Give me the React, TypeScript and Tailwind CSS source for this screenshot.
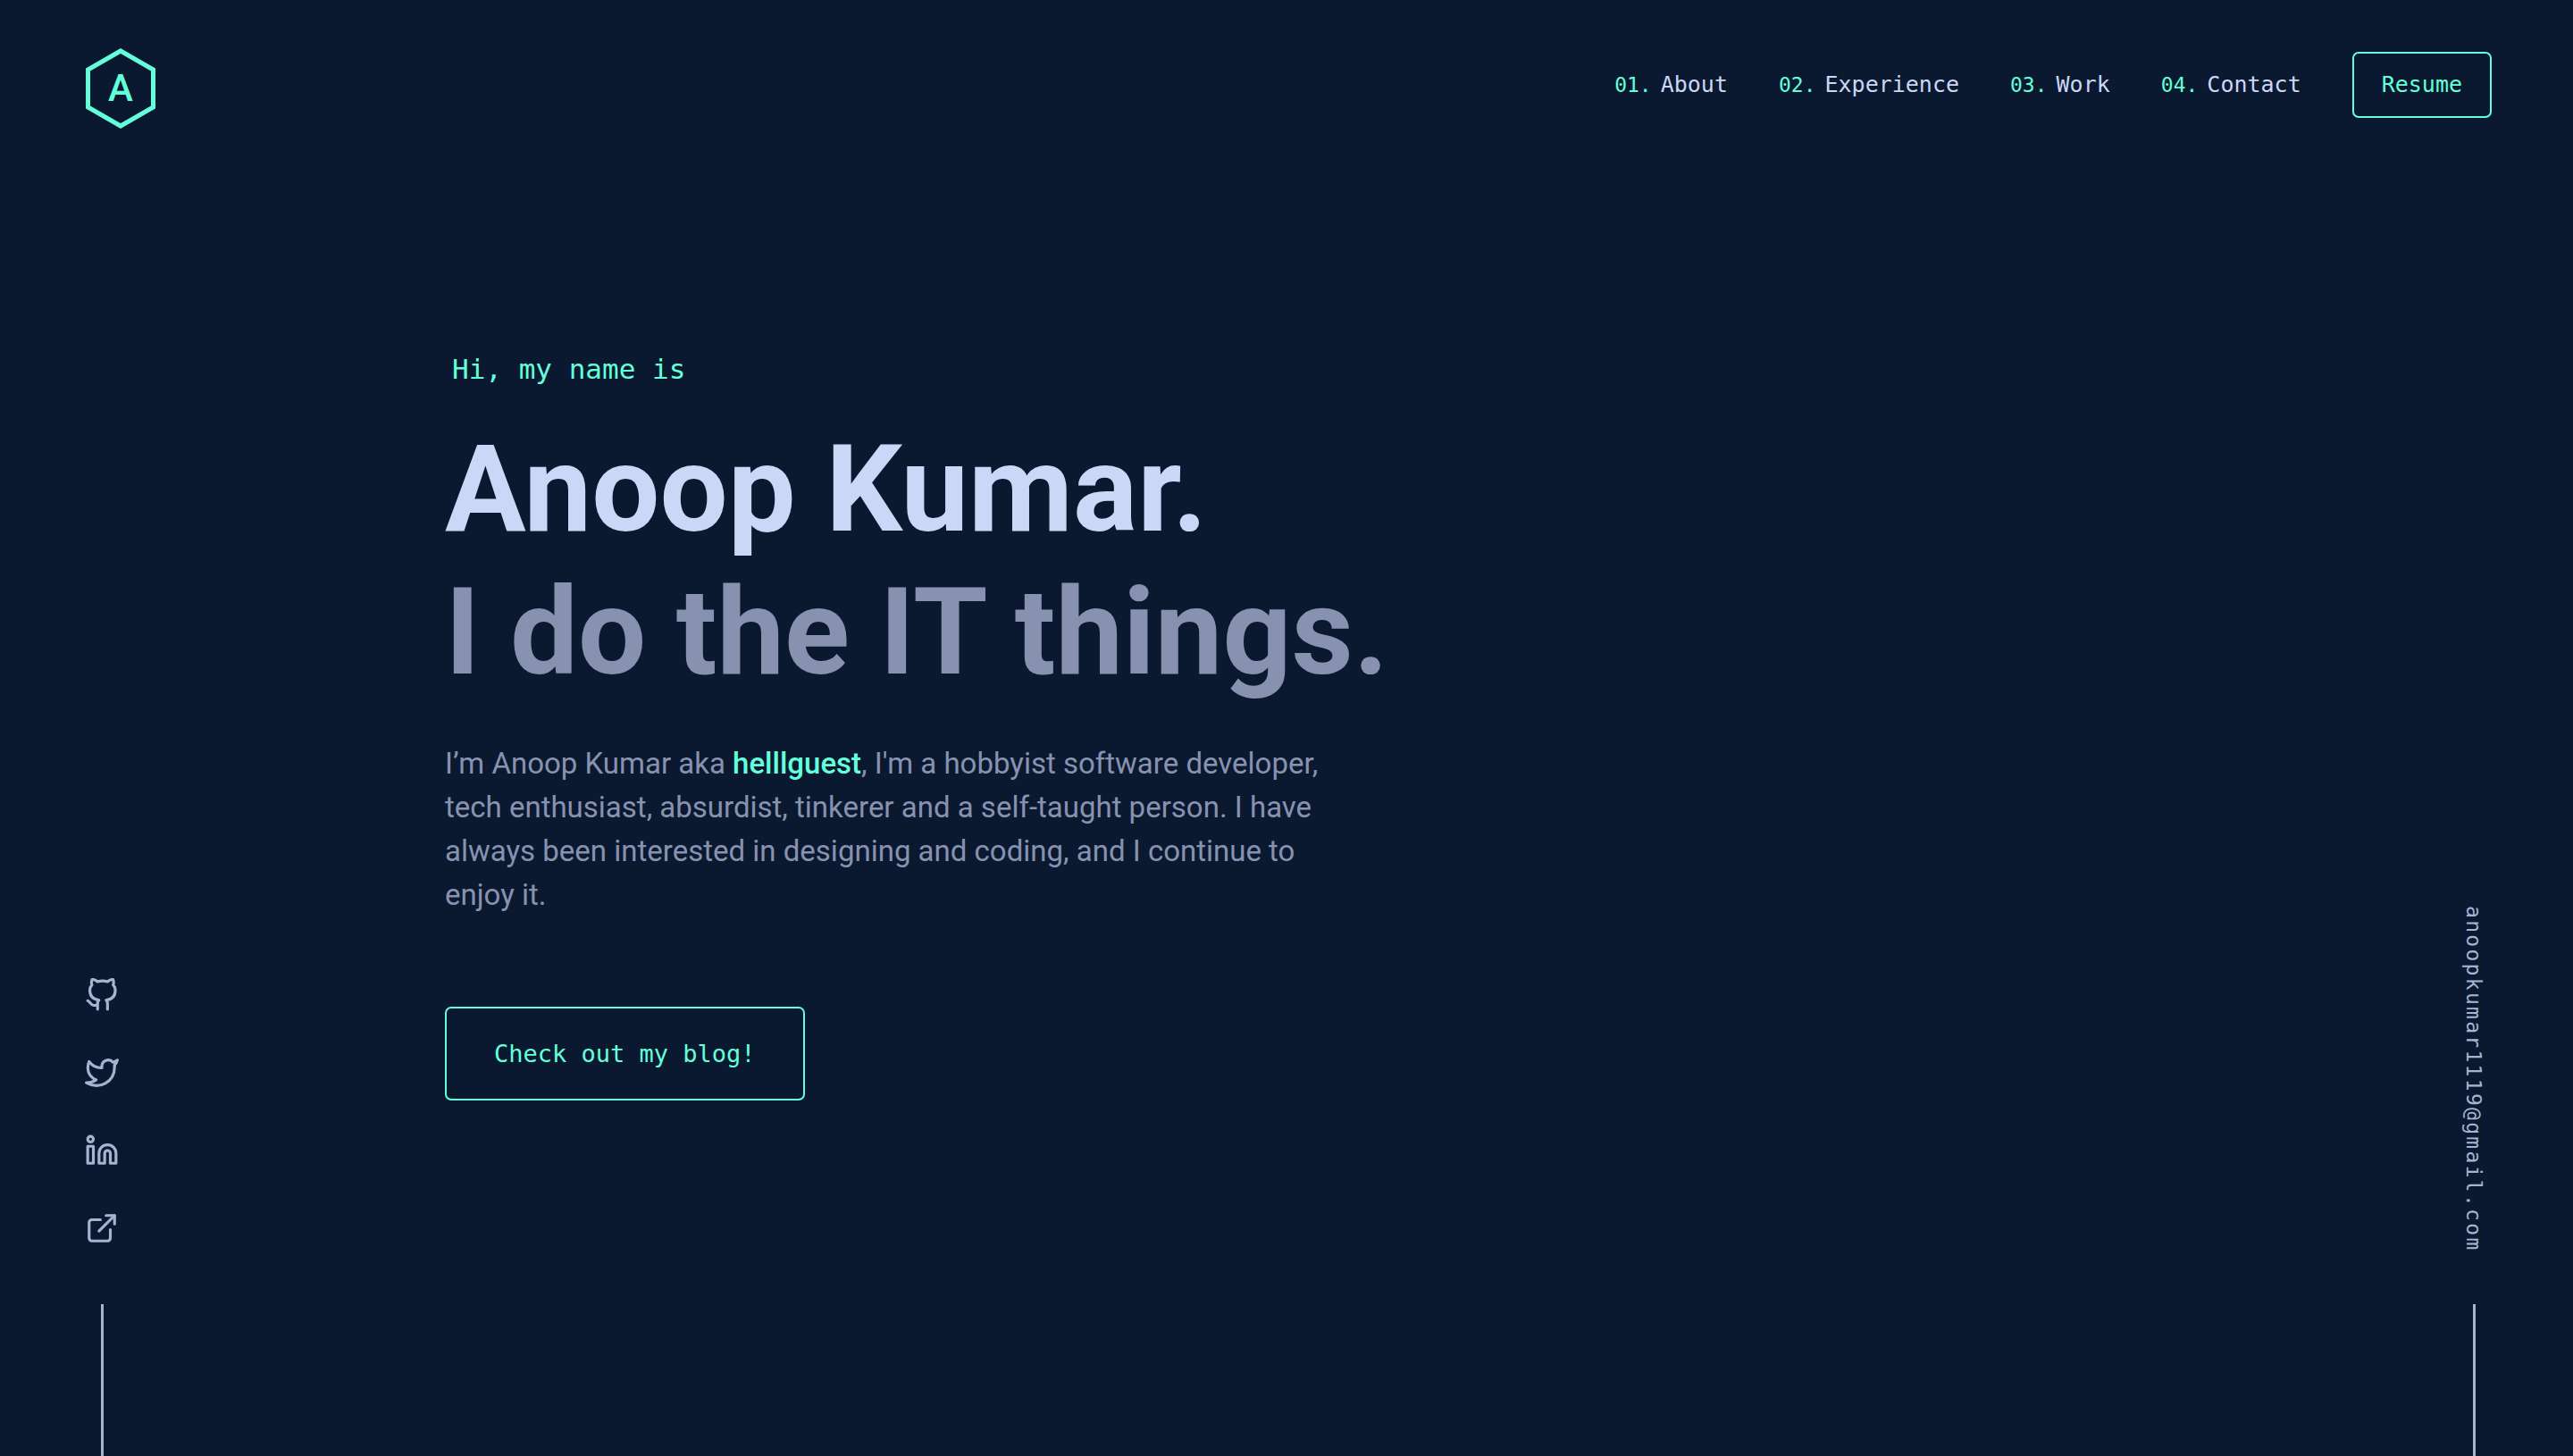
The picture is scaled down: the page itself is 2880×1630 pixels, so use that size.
import React from "react";
import type { ReactNode } from "react";

const navItems = ["About", "Experience", "Work", "Contact"];

function Icon({ children }: { children: ReactNode }) {
  return (
    <svg
      viewBox="0 0 24 24"
      className="size-[38px]"
      fill="none"
      stroke="currentColor"
      strokeWidth="2"
      strokeLinecap="round"
      strokeLinejoin="round"
      aria-hidden="true"
    >
      {children}
    </svg>
  );
}

const socials = [
  {
    name: "GitHub",
    icon: (
      <Icon>
        <path d="M9 19c-5 1.5-5-2.5-7-3m14 6v-3.87a3.37 3.37 0 0 0-.94-2.61c3.14-.35 6.44-1.54 6.44-7A5.44 5.44 0 0 0 20 4.77 5.07 5.07 0 0 0 19.91 1S18.73.65 16 2.48a13.38 13.38 0 0 0-7 0C6.27.65 5.09 1 5.09 1A5.07 5.07 0 0 0 5 4.77a5.44 5.44 0 0 0-1.5 3.78c0 5.42 3.3 6.61 6.44 7A3.37 3.37 0 0 0 9 18.13V22" />
      </Icon>
    ),
  },
  {
    name: "Twitter",
    icon: (
      <Icon>
        <path d="M23 3a10.9 10.9 0 0 1-3.14 1.53 4.48 4.48 0 0 0-7.86 3v1A10.66 10.66 0 0 1 3 4s-4 9 5 13a11.64 11.64 0 0 1-7 2c9 5 20 0 20-11.5a4.5 4.5 0 0 0-.08-.83A7.72 7.72 0 0 0 23 3z" />
      </Icon>
    ),
  },
  {
    name: "LinkedIn",
    icon: (
      <Icon>
        <path d="M16 8a6 6 0 0 1 6 6v7h-4v-7a2 2 0 0 0-2-2 2 2 0 0 0-2 2v7h-4v-7a6 6 0 0 1 6-6z" />
        <rect x="2" y="9" width="4" height="12" />
        <circle cx="4" cy="4" r="2" />
      </Icon>
    ),
  },
  {
    name: "External site",
    icon: (
      <Icon>
        <path d="M18 13v6a2 2 0 0 1-2 2H5a2 2 0 0 1-2-2V8a2 2 0 0 1 2-2h6" />
        <polyline points="15 3 21 3 21 9" />
        <line x1="10" y1="14" x2="21" y2="3" />
      </Icon>
    ),
  },
];

function Logo() {
  return (
    <a href="#home" aria-label="Home" className="relative flex h-[92px] w-20 items-center justify-center">
      <svg viewBox="0 0 80 92" className="absolute inset-0 size-full" fill="none" aria-hidden="true">
        <path d="M40 4 L76.500 25 V67 L40 88 L3.500 67 V25 Z" stroke="currentColor" strokeWidth="5" />
      </svg>
      <span className="text-[42px] leading-none font-medium">A</span>
    </a>
  );
}

export default function App() {
  return (
    <div className="flex min-h-screen flex-col bg-[#0a192f] font-['Roboto',sans-serif] text-[#8892b0]">
      <header className="flex items-start justify-between pt-[53px] pr-[91px] pl-[95px] text-[#64ffda]">
        <Logo />
        <nav className="mt-[5px] flex items-center gap-[57px] font-['DejaVu_Sans_Mono',monospace] text-[25px] leading-[30px]">
          <ol className="flex gap-[57px]">
            {navItems.map((item, i) => (
              <li key={item}>
                <a href={`#${item.toLowerCase()}`} className="flex items-baseline gap-2.5 text-[#ccd6f6]">
                  <span className="text-[23px] leading-[30px] text-[#64ffda]">{`0${i + 1}.`}</span>
                  {item}
                </a>
              </li>
            ))}
          </ol>
          <a href="#resume" className="rounded-[7px] border-2 border-[#64ffda] px-[31px] py-5">
            Resume
          </a>
        </nav>
      </header>

      <div className="flex grow justify-between pr-[91px] pl-[95px]">
        <aside className="flex flex-col items-center justify-end text-[#a8b2d1]">
          <ul className="flex flex-col gap-[49px]">
            {socials.map((s) => (
              <li key={s.name}>
                <a href={`#${s.name.toLowerCase().replace(" ", "-")}`} aria-label={s.name} className="block">
                  {s.icon}
                </a>
              </li>
            ))}
          </ul>
          <div className="mt-[66px] h-[170px] w-[3px] bg-[#a8b2d1]" />
        </aside>

        <main className="ml-[365px] grow pt-[248px]">
          <p className="pl-2 font-['DejaVu_Sans_Mono',monospace] text-[31px] leading-10 text-[#64ffda]">
            Hi, my name is
          </p>
          <h1 className="mt-[35px] text-[135px] leading-[160px] font-bold text-[#ccd6f6]">Anoop Kumar.</h1>
          <h2 className="text-[135px] leading-[160px] font-bold">I do the IT things.</h2>
          <p className="mt-[42px] max-w-[1000px] text-[33px] leading-[49px]">
            I’m Anoop Kumar aka{" "}
            <a href="#helllguest" className="font-medium text-[#64ffda]">
              helllguest
            </a>
            , I'm a hobbyist software developer, tech enthusiast, absurdist, tinkerer and a self-taught
            person. I have always been interested in designing and coding, and I continue to enjoy it.
          </p>
          <a
            href="#blog"
            className="mt-[101px] inline-block rounded-[7px] border-2 border-[#64ffda] px-[53px] py-[34px] font-['DejaVu_Sans_Mono',monospace] text-[27px] leading-[33px] text-[#64ffda]"
          >
            Check out my blog!
          </a>
        </main>

        <aside className="flex flex-col items-center justify-end text-[#a8b2d1]">
          <a
            href="mailto:anoopkumar1119@gmail.com"
            className="font-['DejaVu_Sans_Mono',monospace] text-[23px] leading-[40px] tracking-widest [writing-mode:vertical-rl]"
          >
            anoopkumar1119@gmail.com
          </a>
          <div className="mt-[58px] h-[170px] w-[3px] bg-[#a8b2d1]" />
        </aside>
      </div>
    </div>
  );
}
